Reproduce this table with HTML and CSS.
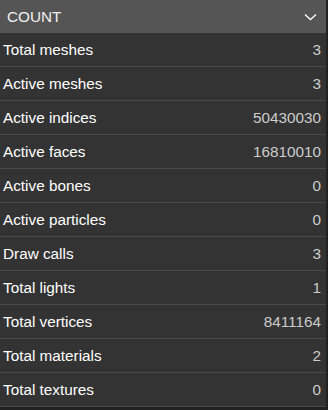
FILE: index.html
```html
<!DOCTYPE html>
<html lang="en">
<head>
    <meta charset="UTF-8">
    <meta name="viewport" content="width=device-width, initial-scale=1.0">
    <title>Statistics - Count</title>
    <link rel="stylesheet" href="styles.css">
</head>
<body>
<div class="pane">
    <div class="pane-header">
        <span>COUNT</span>
        <svg class="chevron" width="13" height="8" viewBox="0 0 13 8">
            <path d="M1 1.5 L6.5 6.5 L12 1.5" fill="none" stroke="#fff" stroke-width="1.3"/>
        </svg>
    </div>
    <div class="stats">
        <div class="stat-row"><span class="stat-label">Total meshes</span><span class="stat-value">3</span></div>
        <div class="stat-row"><span class="stat-label">Active meshes</span><span class="stat-value">3</span></div>
        <div class="stat-row"><span class="stat-label">Active indices</span><span class="stat-value">50430030</span></div>
        <div class="stat-row"><span class="stat-label">Active faces</span><span class="stat-value">16810010</span></div>
        <div class="stat-row"><span class="stat-label">Active bones</span><span class="stat-value">0</span></div>
        <div class="stat-row"><span class="stat-label">Active particles</span><span class="stat-value">0</span></div>
        <div class="stat-row"><span class="stat-label">Draw calls</span><span class="stat-value">3</span></div>
        <div class="stat-row"><span class="stat-label">Total lights</span><span class="stat-value">1</span></div>
        <div class="stat-row"><span class="stat-label">Total vertices</span><span class="stat-value">8411164</span></div>
        <div class="stat-row"><span class="stat-label">Total materials</span><span class="stat-value">2</span></div>
        <div class="stat-row"><span class="stat-label">Total textures</span><span class="stat-value">0</span></div>
    </div>
</div>
</body>
</html>
```

FILE: styles.css
```css
/* Inspector pane */
body {
    margin: 0;
    background-color: #222;
    font-family: 'Liberation Sans', Arial, sans-serif;
    font-size: 15.3px;
}

.pane {
    width: 326px;
    background-color: #333;
}

.pane-header {
    height: 33px;
    background-color: #555;
    color: #f0f0f0;
    display: flex;
    align-items: center;
    justify-content: space-between;
    padding: 0 9px 0 7px;
}

.chevron {
    margin-top: 1px;
}

.stat-row {
    height: 33px;
    border-bottom: 1px solid #4a4a4a;
    display: flex;
    align-items: center;
    justify-content: space-between;
    padding: 0 5px 0 3px;
}

.stat-label {
    color: #fff;
}

.stat-value {
    color: #ccc;
}
```
